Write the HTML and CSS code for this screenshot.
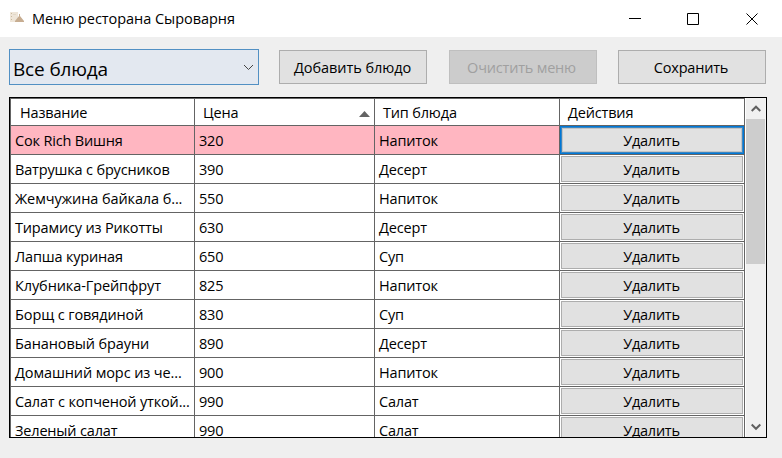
FILE: index.html
```html
<!DOCTYPE html>
<html lang="ru">
<head>
<meta charset="utf-8">
<title>Меню ресторана Сыроварня</title>
<link rel="stylesheet" href="styles.css">
</head>
<body>
<header class="titlebar">
  <svg class="app-icon" width="15" height="12" viewBox="0 0 15 12"><path fill="#eee5d8" d="M0 1h8v10H0z"/><path fill="#c9ba9f" d="M1 2h1v1H1zM1 5h1v1H1zM1 8h1v1H1z"/><path fill="#e2d8c8" d="M3 3h3v1H3z"/><path fill="#c7ad91" d="M9 3h1v2l4 5v1H5v-1l4-5z"/></svg>
  <h1 class="title">Меню ресторана Сыроварня</h1>
  <svg class="controls" width="140" height="14" viewBox="0 0 140 14" fill="none" stroke="#000"><path d="M0 6.500h12M58.500 1.500h11v11h-11z"/><path d="M117.500 1.500l11 11M128.500 1.500l-11 11"/></svg>
</header>
<main class="content">
  <div class="toolbar">
    <div class="select"><span>Все блюда</span><svg width="11" height="7" viewBox="0 0 11 7" fill="none" stroke="#444"><path d="M1 1l4.500 4.500L10 1"/></svg></div>
    <button class="btn add">Добавить блюдо</button>
    <button class="btn clear" disabled>Очистить меню</button>
    <button class="btn save">Сохранить</button>
  </div>
  <section class="frame">
    <div class="grid">
      <div class="row head"><div>Название</div><div>Цена<svg class="sort" width="11" height="6" viewBox="0 0 11 6"><path fill="#646464" d="M5.500 0L11 6H0z"/></svg></div><div>Тип блюда</div><div>Действия</div></div>
      <div class="row selected"><div>Сок Rich Вишня</div><div>320</div><div>Напиток</div><div><button>Удалить</button></div></div>
      <div class="row"><div>Ватрушка с брусников</div><div>390</div><div>Десерт</div><div><button>Удалить</button></div></div>
      <div class="row"><div class="loose">Жемчужина байкала б...</div><div>550</div><div>Напиток</div><div><button>Удалить</button></div></div>
      <div class="row"><div>Тирамису из Рикотты</div><div>630</div><div>Десерт</div><div><button>Удалить</button></div></div>
      <div class="row"><div>Лапша куриная</div><div>650</div><div>Суп</div><div><button>Удалить</button></div></div>
      <div class="row"><div class="loose">Клубника-Грейпфрут</div><div>825</div><div>Напиток</div><div><button>Удалить</button></div></div>
      <div class="row"><div class="loose">Борщ с говядиной</div><div>830</div><div>Суп</div><div><button>Удалить</button></div></div>
      <div class="row"><div class="loose">Банановый брауни</div><div>890</div><div>Десерт</div><div><button>Удалить</button></div></div>
      <div class="row"><div class="loose">Домашний морс из че...</div><div>900</div><div>Напиток</div><div><button>Удалить</button></div></div>
      <div class="row"><div>Салат с копченой уткой...</div><div>990</div><div>Салат</div><div><button>Удалить</button></div></div>
      <div class="row"><div>Зеленый салат</div><div>990</div><div>Салат</div><div><button>Удалить</button></div></div>
    </div>
    <div class="scrollbar">
      <svg class="arrow" width="10" height="8" viewBox="0 0 10 8" fill="none" stroke="#606060" stroke-width="2"><path d="M.7 6L5 1.700 9.300 6"/></svg>
      <div class="thumb"></div>
      <svg class="arrow down" width="10" height="8" viewBox="0 0 10 8" fill="none" stroke="#606060" stroke-width="2"><path d="M.7 1.500L5 5.800 9.300 1.500"/></svg>
    </div>
  </section>
</main>
</body>
</html>
```
FILE: styles.css
```css
* { box-sizing: border-box; }
body {
  margin: 0;
  width: 782px;
  height: 458px;
  overflow: hidden;
  background: #efefef;
  color: #000;
  font: 14.5px/20px "Open Sans", "Noto Sans", sans-serif;
}
button { font: inherit; color: inherit; margin: 0; padding: 0; border-radius: 0; white-space: nowrap; }
.titlebar { height: 37px; background: #fff; display: flex; align-items: center; padding-left: 10px; }
.app-icon { margin-top: -3px; }
.title { margin: 0 0 0 7px; font-size: 14.5px; font-weight: 400; letter-spacing: -.04px; }
.controls { margin: 0 13px 0 auto; }
.content { padding: 12px 15px 0 9px; }
.toolbar { display: flex; height: 48px; align-items: flex-start; }
.select {
  width: 250px; height: 36px;
  display: flex; align-items: center; justify-content: space-between;
  padding: 4px 4px 0 3px;
  border: 1px solid #5290c3;
  background: #e3e8f0;
  font-size: 19px;
  letter-spacing: -.15px;
}
.select svg { margin-top: -4px; }
.btn { width: 148px; height: 34px; margin-top: 1px; border: 1px solid #adadad; background: #e1e1e1; padding: 1px 1px 0 0; letter-spacing: -.06px; }
.add { margin-left: 20px; }
.clear { margin-left: 22px; padding-right: 3px; background: #ccc; border-color: #bfbfbf; color: #a0a0a0; letter-spacing: -.2px; }
.save { margin-left: 21px; padding-right: 2px; letter-spacing: -.2px; }
.frame { width: 758px; height: 341px; border: 1px solid #000; display: flex; overflow: hidden; background: #fff; }
.grid { width: 735px; border-top: 1px solid #646464; border-left: 1px solid #646464; }
.row { display: grid; grid-template-columns: 184px 180px 185px 185px; height: 29px; }
.row > div { border-right: 1px solid #646464; border-bottom: 1px solid #646464; padding: 5px 0 0 4px; white-space: nowrap; overflow: hidden; letter-spacing: -.17px; }
.row > .loose { letter-spacing: -.1px; }
.head { height: 27px; }
.head > div { padding: 4px 0 0 8px; display: flex; }
.head > div:first-child { padding-left: 9px; }
.sort { margin: 8px 4px 0 auto; }
.selected > div { background: #ffb6c1; }
.row:not(.head) > div:last-child { padding: 1px; background: #fff; }
.row button { display: block; width: 182px; height: 26px; border: 1px solid #adadad; background: #e1e1e1; letter-spacing: -.25px; padding: 1px 1px 0 0; }
.row.selected > div:last-child { padding: 0; }
.selected button { width: 184px; height: 28px; border: 1px solid #0078d7; box-shadow: inset 0 0 0 1px #3a86c2, inset 0 0 0 2px #c4c4c4; }
.scrollbar { flex: 1; display: flex; flex-direction: column; background: #f0f0f0; border-left: 1px solid #fff; border-right: 1px solid #f4f4f4; }
.arrow { margin: 7px auto 6px; flex: none; }
.thumb { height: 145px; background: #cdcdcd; }
.down { margin-top: auto; }
```
